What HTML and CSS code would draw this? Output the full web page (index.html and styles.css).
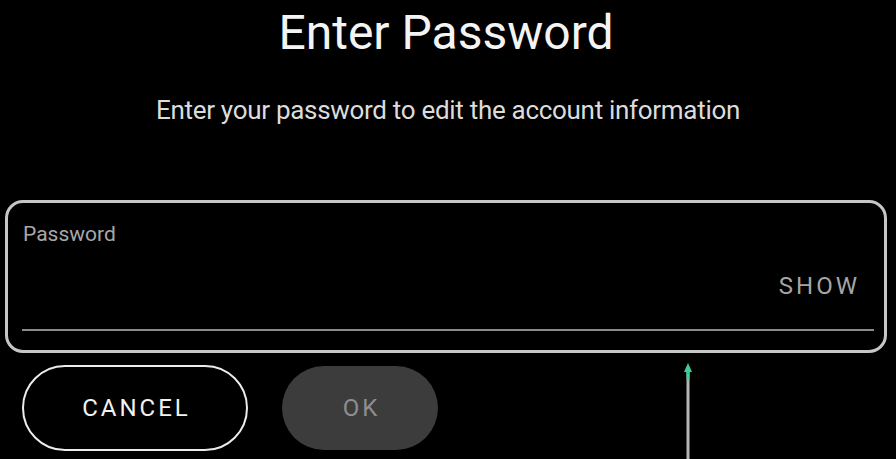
FILE: index.html
```html
<!DOCTYPE html>
<html lang="en">
<head>
<meta charset="utf-8">
<title>Enter Password</title>
<link rel="stylesheet" href="styles.css">
</head>
<body>
<main class="dialog">
  <h1 class="title">Enter Password</h1>
  <p class="subtitle">Enter your password to edit the account information</p>
  <div class="field">
    <label class="field-label">Password</label>
    <div class="field-row">
      <span class="field-value"></span>
      <span class="show">SHOW</span>
    </div>
    <div class="field-line"></div>
  </div>
  <div class="actions">
    <button class="btn btn-cancel">CANCEL</button>
    <button class="btn btn-ok">OK</button>
  </div>
  <svg class="pointer" width="12" height="100" viewBox="0 0 12 100">
    <rect x="4.5" y="10" width="3" height="90" fill="#b5b5b5"/>
    <path d="M6 1 L10 10 L7.5 10 L7.5 18 L4.5 18 L4.5 10 L2 10 Z" fill="#3fcf95"/>
  </svg>
</main>
</body>
</html>
```
FILE: styles.css
```css
* { box-sizing: border-box; }
html, body { margin: 0; padding: 0; background: #000; }
body {
  width: 896px;
  height: 459px;
  overflow: hidden;
  font-family: Roboto, "Liberation Sans", Arial, sans-serif;
  color: #fff;
}
.dialog {
  position: relative;
  display: flex;
  flex-direction: column;
  padding-top: 3px;
  height: 459px;
}
.title {
  margin: 0;
  font-size: 48px;
  line-height: 60px;
  font-weight: 400;
  text-align: center;
  color: #f4f4f4;
  padding-right: 4px;
}
.subtitle {
  margin: 32px 0 0;
  font-size: 26px;
  line-height: 30px;
  text-align: center;
  color: #dcdcdc;
  letter-spacing: -0.3px;
}
.field {
  margin: 75px 9px 0 5px;
  height: 153px;
  border: 3px solid #c6c6c6;
  border-radius: 18px;
  display: flex;
  flex-direction: column;
  padding: 18px 10px 0 14px;
}
.field-label {
  font-size: 21px;
  line-height: 26px;
  color: #a8a8a8;
  padding-left: 1px;
}
.field-row {
  display: flex;
  justify-content: space-between;
  align-items: center;
  margin-top: 24px;
  height: 30px;
}
.show {
  font-size: 24px;
  letter-spacing: 3px;
  color: #a5a5a5;
  margin-right: 14px;
}
.field-line {
  margin-top: 28px;
  height: 2px;
  background: #8a8a8a;
}
.actions {
  display: flex;
  align-items: center;
  gap: 34px;
  margin: 12px 0 0 22px;
}
.btn {
  font-family: Roboto, "Liberation Sans", Arial, sans-serif;
  font-size: 24px;
  letter-spacing: 3px;
  border-radius: 44px;
  cursor: pointer;
  padding: 0 0 0 3px;
}
.btn-cancel {
  width: 226px;
  height: 86px;
  background: #000;
  color: #f2f2f2;
  border: 2px solid #ececec;
}
.btn-ok {
  width: 156px;
  height: 84px;
  background: #3c3c3c;
  color: #8e8e8e;
  border: none;
}
.pointer {
  position: absolute;
  left: 682px;
  top: 362px;
}
```
